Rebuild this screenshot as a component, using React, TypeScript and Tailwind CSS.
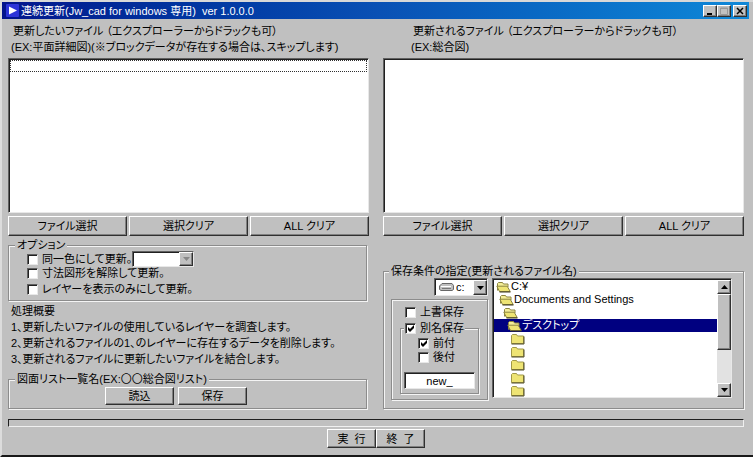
import { useState } from "react";
import type { ReactNode } from "react";

const raised =
  "border border-t-white border-l-white border-r-[#303030] border-b-[#303030] shadow-[inset_-1px_-1px_0_#808080] bg-[#c0c0c0]";
const sunken =
  "border border-t-[#606060] border-l-[#606060] border-r-[#e8e8e8] border-b-[#e8e8e8] shadow-[inset_1px_1px_0_#202020] bg-white";
const etched =
  "min-w-0 border border-[#8c8c8c] shadow-[1px_1px_0_#f4f4f4,inset_1px_1px_0_#f4f4f4]";

function Button({
  children,
  className = "",
}: {
  children: ReactNode;
  className?: string;
}) {
  return (
    <button
      type="button"
      className={`flex items-center justify-center whitespace-pre leading-3 ${raised} ${className}`}
    >
      {children}
    </button>
  );
}

function Check({ label, checked = false }: { label: string; checked?: boolean }) {
  const [on, setOn] = useState(checked);
  return (
    <label className="flex items-center gap-1 whitespace-nowrap leading-3">
      <span className="relative block size-[11px]">
        <input
          type="checkbox"
          checked={on}
          onChange={() => setOn(!on)}
          className={`block size-[11px] appearance-none ${sunken}`}
        />
        {on && (
          <svg
            viewBox="0 0 11 11"
            className="pointer-events-none absolute inset-0 size-[11px]"
          >
            <path d="M3 4v3l2 2 4-4V2L5 6z" fill="#000" />
          </svg>
        )}
      </span>
      {label}
    </label>
  );
}

function Arrow({ up = false, color = "#000" }: { up?: boolean; color?: string }) {
  return (
    <svg viewBox="0 0 7 4" className="h-1 w-[7px]">
      <path d={up ? "M0 4h7L3.5 0z" : "M0 0h7L3.5 4z"} fill={color} />
    </svg>
  );
}

function Folder({ open = false }: { open?: boolean }) {
  return (
    <svg viewBox="0 0 15 12" className="h-3 w-[15px] shrink-0">
      {open ? (
        <>
          <path
            d="M1.5 9.5v-7l1-1h4l1 1.5h4.5v3"
            fill="#f4ee98"
            stroke="#8c8440"
          />
          <path
            d="M.8 5.2h10.4l3 5.3H3.5z"
            fill="#eee474"
            stroke="#8c8440"
          />
          <path d="M3.5 11h11" stroke="#403c20" />
        </>
      ) : (
        <>
          <path
            d="M1.5 10.5v-8l1-1h4l1 1.5h6v7.5z"
            fill="#eee474"
            stroke="#a09848"
          />
          <path d="M1.5 11h12.5V3.5" fill="none" stroke="#504c28" />
        </>
      )}
    </svg>
  );
}

function FilePanel({
  title,
  example,
  focused = false,
}: {
  title: string;
  example: string;
  focused?: boolean;
}) {
  return (
    <section>
      <div className={focused ? "pl-[5px]" : "pl-[30px]"}>{title}</div>
      <div className={focused ? "pl-[3px]" : "pl-7"}>{example}</div>
      <ul
        role="listbox"
        aria-label={title}
        className={`mt-[3px] h-[155px] p-px ${sunken}`}
      >
        {focused && (
          <li
            role="option"
            aria-selected="false"
            className="h-3 border border-dotted border-[#303030]"
          />
        )}
      </ul>
      <div className="mt-[3px] grid grid-cols-3 gap-0.5">
        <Button className="h-5">ファイル選択</Button>
        <Button className="h-5">選択クリア</Button>
        <Button className="h-5">ALL クリア</Button>
      </div>
    </section>
  );
}

const folders = [
  { name: "C:¥", open: true, indent: "pl-0.5" },
  { name: "Documents and Settings", open: true, indent: "pl-[5px]" },
  { name: "", open: true, indent: "pl-[9px]" },
  { name: "デスクトップ", open: true, indent: "pl-[13px]", selected: true },
  { name: "", indent: "pl-4" },
  { name: "", indent: "pl-4" },
  { name: "", indent: "pl-4" },
  { name: "", indent: "pl-4" },
  { name: "", indent: "pl-4" },
];

export default function App() {
  return (
    <div className="border-t-2 border-l-2 border-b-2 border-t-[#d8d8d8] border-l-[#dcdcdc] border-b-[#181818] bg-[#c0c0c0] pb-[7px] font-['Liberation_Sans','Noto_Sans_CJK_JP',sans-serif] text-[11px] leading-4 text-black [font-feature-settings:'palt']">
      <header className="mr-1 flex h-[17px] items-center bg-linear-to-r from-[#04148c] via-[#0a50b4] to-[#1088d8] pr-0.5 pl-1 text-white">
        <svg viewBox="0 0 13 13" className="size-[13px]">
          <rect width="13" height="13" rx="1" fill="#2c34d8" />
          <path d="M3 2.5v8l8-4z" fill="#fff" />
        </svg>
        <h1 className="ml-0.5 flex-1 whitespace-pre">
          連続更新(Jw_cad for windows 専用)  ver 1.0.0.0
        </h1>
        <Button className="h-3 w-[14px]">
          <svg viewBox="0 0 8 8" className="size-2" aria-label="最小化">
            <path d="M1 6h5v2H1z" />
          </svg>
        </Button>
        <Button className="h-3 w-[14px]">
          <svg viewBox="0 0 8 8" className="size-2" aria-label="最大化">
            <path d="M.5 1h7v6.5h-7zM.5 1.5h7" fill="none" stroke="#989898" />
          </svg>
        </Button>
        <Button className="ml-0.5 h-3 w-[14px]">
          <svg viewBox="0 0 8 8" className="size-2" aria-label="閉じる">
            <path d="M1 1l6 6M7 1l-6 6" stroke="#000" strokeWidth="1.5" />
          </svg>
        </Button>
      </header>

      <main className="pt-1 pr-[9px] pl-[6px]">
        <div className="grid grid-cols-2 gap-x-[14px]">
          <FilePanel
            title="更新したいファイル （エクスプローラーからドラックも可）"
            example="(EX:平面詳細図)(※ブロックデータが存在する場合は、スキップします)"
            focused
          />
          <FilePanel
            title="更新されるファイル （エクスプローラーからドラックも可）"
            example="(EX:総合図)"
          />

          <div className="mt-[3px] pr-0.5">
            <fieldset className={`pb-[5px] pl-[18px] ${etched}`}>
              <legend className="-ml-3 bg-[#c0c0c0] px-0.5 leading-3">
                オプション
              </legend>
              <div className="flex h-4 items-center">
                <Check label="同一色にして更新。" />
                <div className={`relative h-4 w-[62px] ${sunken}`}>
                  <select
                    aria-label="更新する色"
                    disabled
                    className="block h-full w-full appearance-none bg-transparent"
                  />
                  <span
                    className={`pointer-events-none absolute top-0 right-0 flex h-[14px] w-[14px] items-center justify-center ${raised}`}
                  >
                    <Arrow color="#888888" />
                  </span>
                </div>
              </div>
              <Check label="寸法図形を解除して更新。" />
              <div className="mt-1">
                <Check label="レイヤーを表示のみにして更新。" />
              </div>
            </fieldset>

            <div className="mt-0.5 pl-[3px]">
              <h2>処理概要</h2>
              <ol>
                <li>1、更新したいファイルの使用しているレイヤーを調査します。</li>
                <li>2、更新されるファイルの1、のレイヤーに存在するデータを削除します。</li>
                <li>3、更新されるファイルに更新したいファイルを結合します。</li>
              </ol>
            </div>

            <fieldset className={`mt-[6px] pb-[3px] ${etched}`}>
              <legend className="ml-[6px] bg-[#c0c0c0] px-0.5 leading-3">
                図面リスト一覧名(EX:〇〇総合図リスト)
              </legend>
              <div className="flex gap-1 pt-0.5 pl-24">
                <Button className="h-[18px] w-[69px]">読込</Button>
                <Button className="h-[18px] w-[69px]">保存</Button>
              </div>
            </fieldset>
          </div>

          <fieldset
            className={`mt-[29px] flex flex-col px-[7px] pb-2 ${etched}`}
          >
            <legend className="-ml-[2px] bg-[#c0c0c0] px-0.5 leading-3">
              保存条件の指定(更新されるファイル名)
            </legend>
            <div className="flex gap-1 pt-px">
              <div className="flex w-[97px] shrink-0 flex-col items-end">
                <div
                  className={`relative flex h-[18px] w-[54px] items-center pl-1 ${sunken}`}
                >
                  <svg viewBox="0 0 15 8" className="h-2 w-[15px] shrink-0">
                    <path
                      d="M3 .5h10l1.5 2v4l-1.5 1H2L.5 6.5V3z"
                      fill="#c0c0c0"
                      stroke="#686868"
                    />
                    <path d="M2 3.5h10" stroke="#fff" />
                    <path d="M3 5.5h9" stroke="#787878" />
                  </svg>
                  <select
                    aria-label="ドライブ"
                    className="h-full flex-1 appearance-none bg-transparent pl-0.5 leading-3"
                  >
                    <option>c:</option>
                  </select>
                  <span
                    className={`pointer-events-none absolute top-px right-0 flex h-[15px] w-[14px] items-center justify-center ${raised}`}
                  >
                    <Arrow />
                  </span>
                </div>
                <div
                  className={`mt-[3px] w-full px-2 pt-[5px] pb-[5px] ${etched}`}
                >
                  <div className="flex h-[14px] items-center pl-[5px]">
                    <Check label="上書保存" />
                  </div>
                  <fieldset
                    className={`mt-[3px] px-[3px] pb-1 ${etched}`}
                  >
                    <legend className="bg-[#c0c0c0] px-px">
                      <Check label="別名保存" checked />
                    </legend>
                    <div className="flex flex-col gap-0.5 pt-[3px] pl-[14px]">
                      <Check label="前付" checked />
                      <Check label="後付" />
                    </div>
                    <input
                      aria-label="付加する名前"
                      defaultValue="new_"
                      className={`mt-[9px] block h-[17px] w-full text-center leading-3 ${sunken}`}
                    />
                  </fieldset>
                </div>
              </div>

              <div
                className={`mr-1 flex h-[120px] min-w-0 flex-1 pt-px pl-px ${sunken}`}
              >
                <ul
                  role="listbox"
                  aria-label="フォルダ"
                  className="min-w-0 flex-1 overflow-hidden"
                >
                  {folders.map((folder, i) => (
                    <li
                      key={i}
                      role="option"
                      aria-selected={!!folder.selected}
                      className={`flex h-[13px] items-center leading-[13px] ${folder.indent} ${
                        folder.selected ? "bg-[#000080] text-white" : ""
                      }`}
                    >
                      <Folder open={folder.open} />
                      {folder.name}
                    </li>
                  ))}
                </ul>
                <div className="flex w-[14px] flex-col bg-[#e2e2e2]">
                  <button
                    type="button"
                    aria-label="上へ"
                    className={`flex h-[14px] items-center justify-center ${raised}`}
                  >
                    <Arrow up />
                  </button>
                  <div className={`h-14 ${raised}`} />
                  <button
                    type="button"
                    aria-label="下へ"
                    className={`mt-auto flex h-[14px] items-center justify-center ${raised}`}
                  >
                    <Arrow />
                  </button>
                </div>
              </div>
            </div>
          </fieldset>
        </div>

        <div
          role="progressbar"
          aria-label="進行状況"
          className="mt-[10px] h-2 border border-t-[#202020] border-l-[#202020] border-r-[#f0f0f0] border-b-[#f0f0f0]"
        />

        <div className="mt-0.5 flex justify-center">
          <Button className="h-[19px] w-[49px]">実  行</Button>
          <Button className="h-[19px] w-[49px]">終  了</Button>
        </div>
      </main>
    </div>
  );
}
